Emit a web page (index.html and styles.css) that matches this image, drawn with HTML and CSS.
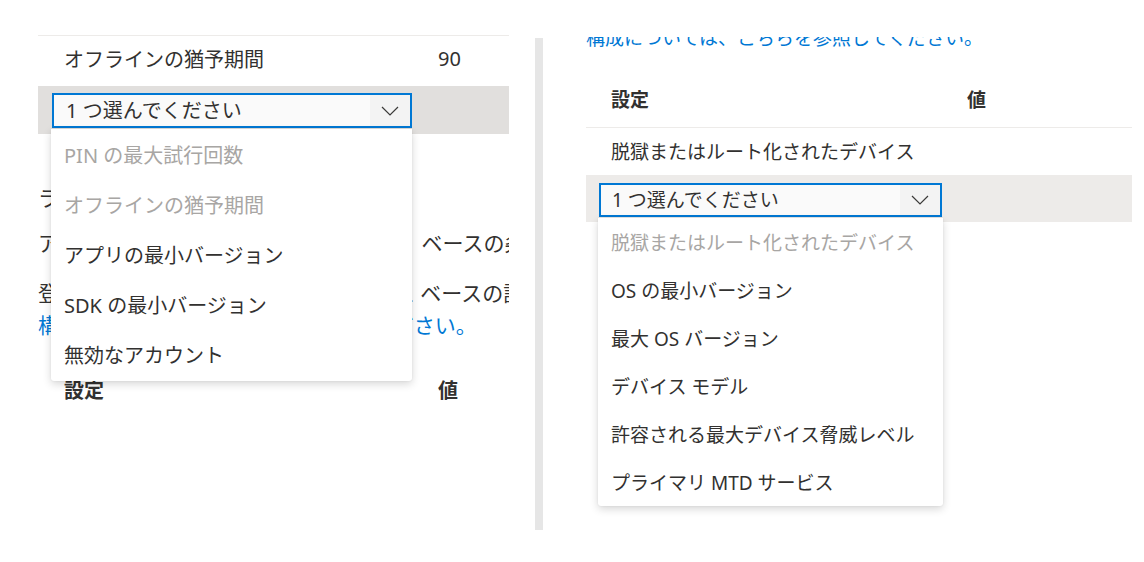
FILE: index.html
```html
<!DOCTYPE html>
<html lang="ja">
<head>
<meta charset="utf-8">
<title>条件付き起動</title>
<link rel="stylesheet" href="styles.css">
</head>
<body>
<div class="page">
  <section class="panel panel-left">
    <div class="row row-top"><span class="c1">オフラインの猶予期間</span><span class="c2">90</span></div>
    <div class="row row-edit">
      <div class="dd">
        <span class="dd-text">1 つ選んでください</span>
        <span class="dd-chev"><svg width="18" height="10" viewBox="0 0 18 10"><path d="M1 1 L9 9 L17 1" fill="none" stroke="#3b3a39" stroke-width="1.2"/></svg></span>
        <ul class="dd-list">
          <li class="off">PIN の最大試行回数</li>
          <li class="off">オフラインの猶予期間</li>
          <li>アプリの最小バージョン</li>
          <li>SDK の最小バージョン</li>
          <li>無効なアカウント</li>
        </ul>
      </div>
    </div>
    <div class="doc">
      <div class="line heading">ランタイムの条件</div>
      <div class="line p1">アプリの起動時には、以下に示すアプリ ベースの条件を構成できます。</div>
      <div class="para">
        <div class="line">登録済みのデバイスの場合は、デバイス ベースの設定も使用できます。</div>
        <div class="line link">構成については、こちらを参照してください。</div>
      </div>
      <div class="row row-head"><span class="c1">設定</span><span class="c2">値</span></div>
    </div>
  </section>
  <div class="divider"></div>
  <section class="panel panel-right">
    <div class="line link top-link">構成については、こちらを参照してください。</div>
    <div class="row row-head"><span class="c1">設定</span><span class="c2">値</span></div>
    <div class="row"><span class="c1">脱獄またはルート化されたデバイス</span></div>
    <div class="row row-edit">
      <div class="dd">
        <span class="dd-text">1 つ選んでください</span>
        <span class="dd-chev"><svg width="18" height="10" viewBox="0 0 18 10"><path d="M1 1 L9 9 L17 1" fill="none" stroke="#3b3a39" stroke-width="1.2"/></svg></span>
        <ul class="dd-list">
          <li class="off">脱獄またはルート化されたデバイス</li>
          <li>OS の最小バージョン</li>
          <li>最大 OS バージョン</li>
          <li>デバイス モデル</li>
          <li>許容される最大デバイス脅威レベル</li>
          <li>プライマリ MTD サービス</li>
        </ul>
      </div>
    </div>
  </section>
</div>
</body>
</html>
```
FILE: styles.css
```css
html, body {
  margin: 0;
  padding: 0;
  background: #ffffff;
}
body {
  font-family: "Noto Sans", "Noto Sans CJK JP", sans-serif;
  color: #323130;
}
.page {
  display: flex;
  align-items: flex-start;
  height: 562px;
  overflow: hidden;
}
.panel {
  overflow: hidden;
}
.panel-left {
  margin-left: 38px;
  width: 471px;
  height: 562px;
  padding-top: 35px;
  box-sizing: border-box;
  font-size: 20px;
}
.divider {
  width: 8px;
  height: 492px;
  margin-top: 38px;
  margin-left: 26px;
  background: #e6e6e6;
  flex: none;
}
.panel-right {
  width: 589px;
  height: 525px;
  margin-top: 37px;
  padding-left: 43px;
  box-sizing: border-box;
  font-size: 19px;
}
.row {
  display: flex;
  align-items: center;
  box-sizing: border-box;
  white-space: nowrap;
}
.panel-left .row {
  height: 51px;
  padding-left: 26px;
}
.panel-left .row-top {
  border-top: 1px solid #edebe9;
  padding-bottom: 5px;
}
.panel-left .c1 {
  width: 374px;
}
.panel-left .row-edit {
  height: 48px;
  padding-left: 14px;
  padding-bottom: 0;
  align-items: flex-start;
  background: #e1dfdd;
}
.panel-right .row {
  height: 47px;
  padding-left: 25px;
  padding-bottom: 2px;
}
.panel-right .c1 {
  width: 356px;
}
.panel-right .row-edit {
  padding-left: 13px;
  padding-bottom: 0;
  align-items: flex-start;
  background: #edebe9;
}
.row-head {
  font-weight: 700;
}
.panel-right .row-head {
  height: 52px;
  margin-top: 23px;
  padding-bottom: 6px;
  border-bottom: 1px solid #edebe9;
}
.panel-left .row-head {
  height: 32px;
  margin-top: 32px;
}
.dd {
  position: relative;
  display: flex;
  align-items: center;
  box-sizing: border-box;
  border: 2px solid #0078d4;
  background: #fafafa;
}
.panel-left .dd {
  width: 360px;
  height: 35px;
  margin-top: 7px;
}
.panel-right .dd {
  width: 343px;
  height: 34px;
  margin-top: 8px;
}
.dd-text {
  flex: 1;
  line-height: 28px;
}
.panel-left .dd-text {
  padding-left: 12px;
}
.panel-right .dd-text {
  padding-left: 11px;
}
.dd-chev {
  width: 40px;
  align-self: stretch;
  display: flex;
  align-items: center;
  justify-content: center;
  background: #f3f3f3;
}
.dd-list {
  position: absolute;
  top: calc(100% + 3px);
  left: -3px;
  margin: 0;
  padding: 0;
  list-style: none;
  background: #ffffff;
  border-radius: 0 0 3px 3px;
  box-shadow: 0 3px 9px rgba(0, 0, 0, 0.16), 0 0 2px rgba(0, 0, 0, 0.08);
  z-index: 5;
}
.dd-list li {
  display: flex;
  align-items: center;
  padding-left: 13px;
  white-space: nowrap;
}
.dd-list li.off {
  color: #a8a6a4;
}
.panel-left .dd-list {
  width: 361px;
  padding-bottom: 2px;
}
.panel-left .dd-list li {
  height: 50px;
}
.panel-right .dd-list {
  width: 345px;
}
.panel-right .dd-list li {
  height: 48px;
}
.doc {
  margin-top: 48px;
}
.line {
  white-space: nowrap;
  line-height: 32px;
}
.doc .line {
  font-size: 21px;
}
.doc .p1 {
  margin-top: 13px;
}
.doc .para {
  margin-top: 18px;
}
.link {
  color: #0078d4;
}
.top-link {
  margin-top: -14px;
  line-height: 30px;
}
```
